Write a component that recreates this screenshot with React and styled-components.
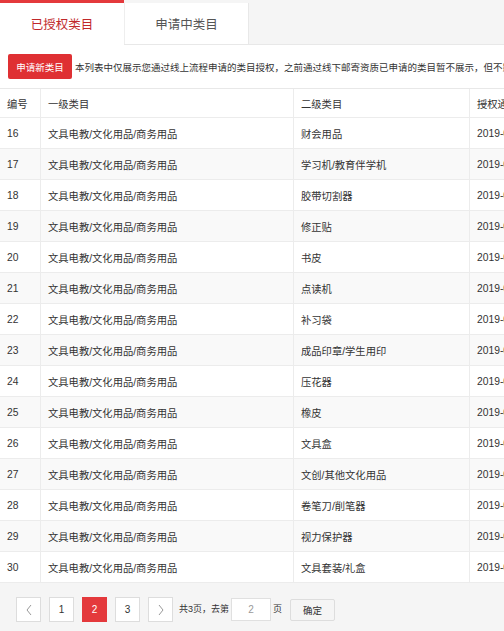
import React from "react";
import styled, { createGlobalStyle } from "styled-components";

const Global = createGlobalStyle`
  html, body { margin: 0; padding: 0; overflow: hidden; background: #fff; }
  body { font-family: "Liberation Sans", "Noto Sans CJK SC", sans-serif; font-size: 10px; color: #333; }
  * { box-sizing: border-box; }
`;

const Page = styled.div`
  width: 780px;
`;

const TabBar = styled.div`
  display: flex;
  height: 45px;
  background: #f5f5f5;
  border-bottom: 1px solid #e8e8e8;
`;

const Tab = styled.div`
  width: ${(p) => (p.$active ? "124px" : "125px")};
  margin-top: ${(p) => (p.$active ? "0" : "3px")};
  height: ${(p) => (p.$active ? "45px" : "41px")};
  background: #fff;
  border-top: ${(p) => (p.$active ? "3px solid #e4393c" : "none")};
  border-left: ${(p) => (p.$active ? "none" : "1px solid #eee")};
  border-right: ${(p) => (p.$active ? "none" : "1px solid #e8e8e8")};
  display: flex;
  align-items: center;
  justify-content: center;
  font-family: "Noto Sans CJK SC", sans-serif;
  font-size: 12.5px;
  color: ${(p) => (p.$active ? "#c0282b" : "#555")};
  padding-bottom: ${(p) => (p.$active ? "1px" : "0")};
`;

const Toolbar = styled.div`
  display: flex;
  align-items: center;
  gap: 3px;
  padding: 9px 8px;
  height: 43px;
  white-space: nowrap;
`;

const RedButton = styled.button`
  height: 25px;
  width: 64px;
  padding: 0;
  border: none;
  border-radius: 2px;
  background: #df3033;
  color: #fff;
  font-family: "Noto Sans CJK SC", sans-serif;
  font-size: 9.5px;
`;

const Note = styled.span`
  font-family: "Noto Sans CJK SC", sans-serif;
  font-size: 9.5px;
  color: #333;
`;

const Table = styled.div`
  border-top: 1px solid #e8e8e8;
`;

const Row = styled.div`
  display: grid;
  grid-template-columns: 40px 253px 176px 1fr;
  height: ${(p) => (p.$head ? "29px" : "31px")};
  background: ${(p) => (p.$stripe ? "#f9f9f9" : "#fff")};
  border-bottom: 1px solid #ececec;
`;

const Cell = styled.div`
  display: flex;
  align-items: center;
  padding-left: 7px;
  border-left: ${(p) => (p.$first ? "none" : "1px solid #ececec")};
  font-family: "Liberation Sans", "Noto Sans CJK SC", sans-serif;
  font-size: 10.3px;
  color: #333;
  white-space: nowrap;
  overflow: hidden;
`;

const Pager = styled.div`
  display: flex;
  align-items: flex-start;
  background: #f5f5f5;
  padding: 14px 16px 0;
  height: 60px;
`;

const PageBtn = styled.div`
  width: 25px;
  height: 25px;
  margin-right: 8px;
  display: flex;
  align-items: center;
  justify-content: center;
  border: 1px solid ${(p) => (p.$active ? "#e4393c" : "#ddd")};
  background: ${(p) => (p.$active ? "#e4393c" : "#fff")};
  color: ${(p) => (p.$active ? "#fff" : "#333")};
  font-size: 10px;
  font-family: "Liberation Sans", sans-serif;
`;

const PagerText = styled.span`
  font-family: "Liberation Sans", "Noto Sans CJK SC", sans-serif;
  font-size: 9px;
  color: #333;
  line-height: 25px;
  margin-left: ${(p) => (p.$tight ? "0" : "-2px")};
`;

const PageInput = styled.div`
  width: 40px;
  height: 23px;
  margin: 1px 2px 0 2px;
  background: #fff;
  border: 1px solid #e0e0e0;
  display: flex;
  align-items: center;
  justify-content: center;
  color: #999;
  font-size: 10px;
`;

const Confirm = styled.div`
  width: 45px;
  height: 22px;
  margin: 2px 0 0 8px;
  background: #f5f5f5;
  border: 1px solid #ddd;
  border-radius: 2px;
  display: flex;
  align-items: center;
  justify-content: center;
  font-family: "Noto Sans CJK SC", sans-serif;
  font-size: 9.5px;
  color: #333;
`;

const Chevron = ({ dir }) => (
  <svg width="8" height="12" viewBox="0 0 8 12">
    <path
      d={dir === "left" ? "M6 1 L2 6 L6 11" : "M2 1 L6 6 L2 11"}
      fill="none"
      stroke="#999"
      strokeWidth="1"
    />
  </svg>
);

const rows = [
  [16, "财会用品"],
  [17, "学习机/教育伴学机"],
  [18, "胶带切割器"],
  [19, "修正贴"],
  [20, "书皮"],
  [21, "点读机"],
  [22, "补习袋"],
  [23, "成品印章/学生用印"],
  [24, "压花器"],
  [25, "橡皮"],
  [26, "文具盒"],
  [27, "文创/其他文化用品"],
  [28, "卷笔刀/削笔器"],
  [29, "视力保护器"],
  [30, "文具套装/礼盒"],
];

export default function App() {
  return (
    <Page>
      <Global />
      <TabBar>
        <Tab $active>已授权类目</Tab>
        <Tab>申请中类目</Tab>
      </TabBar>
      <Toolbar>
        <RedButton>申请新类目</RedButton>
        <Note>
          本列表中仅展示您通过线上流程申请的类目授权，之前通过线下邮寄资质已申请的类目暂不展示，但不影响您的正常经营
        </Note>
      </Toolbar>
      <Table>
        <Row $head>
          <Cell $first>编号</Cell>
          <Cell>一级类目</Cell>
          <Cell>二级类目</Cell>
          <Cell>授权通过时间</Cell>
        </Row>
        {rows.map(([id, name], i) => (
          <Row key={id} $stripe={i % 2 === 1}>
            <Cell $first>{id}</Cell>
            <Cell>文具电教/文化用品/商务用品</Cell>
            <Cell>{name}</Cell>
            <Cell>2019-03-18 10:21:36</Cell>
          </Row>
        ))}
      </Table>
      <Pager>
        <PageBtn>
          <Chevron dir="left" />
        </PageBtn>
        <PageBtn>1</PageBtn>
        <PageBtn $active>2</PageBtn>
        <PageBtn>3</PageBtn>
        <PageBtn>
          <Chevron dir="right" />
        </PageBtn>
        <PagerText>共3页，去第</PagerText>
        <PageInput>2</PageInput>
        <PagerText $tight>页</PagerText>
        <Confirm>确定</Confirm>
      </Pager>
    </Page>
  );
}
